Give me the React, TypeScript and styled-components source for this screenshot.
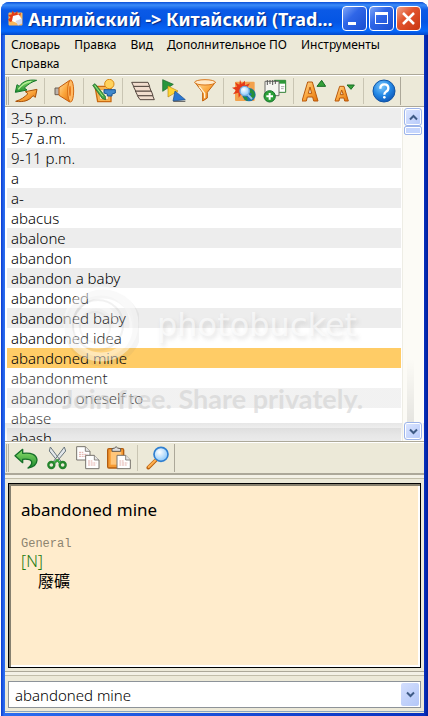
import React from "react";
import styled, { createGlobalStyle } from "styled-components";

const UI = '"Noto Sans", "Noto Sans CJK TC", sans-serif';

const GlobalStyle = createGlobalStyle`
  * { box-sizing: border-box; }
  body { margin: 0; background: #fff; font-family: ${UI}; color: #000; }
  button { padding: 0; border: 0; background: none; font: inherit; color: inherit; }
  svg { display: block; }
`;

const Page = styled.div`
  display: flex;
  min-height: 100vh;
  padding: 2px 0 0 1px;
`;

const Window = styled.main`
  display: flex;
  flex: 1;
  flex-direction: column;
  min-width: 0;
  padding: 0 4px 3px;
  border-radius: 8px 8px 0 0;
  background: linear-gradient(90deg, #0a3bcf, #2a6cf0 3px, #2a6cf0 4px, #0831c0 calc(100% - 4px), #001f9c);
`;

const TitleBar = styled.header`
  display: flex;
  align-items: center;
  gap: 4px;
  height: 33px;
  margin: 0 -4px;
  padding: 0 7px 0 6px;
  border-radius: 8px 8px 0 0;
  background: linear-gradient(#0a4fd8, #3c8cf8 3px, #0b5ae6 8px, #0455e4 20px, #0668fb 29px, #0347c8);
`;

const Title = styled.h1`
  flex: 1;
  min-width: 0;
  margin: 0;
  overflow: hidden;
  color: #fff;
  font-size: 18px;
  line-height: 28px;
  font-weight: 700;
  white-space: nowrap;
  text-shadow: 1px 1px 1px #0a2a80;
`;

const CaptionButtons = styled.div`
  display: flex;
  gap: 2px;
`;

const CaptionButton = styled.button<{ $close?: boolean }>`
  display: grid;
  place-items: center;
  width: 25px;
  height: 25px;
  border: 1px solid #fff;
  border-radius: 4px;
  background: ${(p) =>
    p.$close
      ? "linear-gradient(135deg, #f0a58c, #e2552f 40%, #c93410)"
      : "linear-gradient(135deg, #7ea6f8, #2f66e8 40%, #1a4fd0)"};
`;

const Client = styled.div`
  display: flex;
  flex: 1;
  flex-direction: column;
  min-height: 0;
  padding-bottom: 1px;
  background: #ece9d8;
`;

const MenuBar = styled.nav`
  display: flex;
  flex-wrap: wrap;
  gap: 0 14px;
  padding: 0 6px 1px;
`;

const MenuItem = styled.button`
  font-size: 12px;
  line-height: 19px;
`;

const ToolbarRow = styled.div`
  display: flex;
  height: 33px;
  padding: 2px 0 1px 1px;
  border-top: 1px solid #aca899;
  border-bottom: 1px solid #aca899;
  box-shadow: inset 0 1px #fff;
`;

const ToolGroup = styled.div`
  display: flex;
  align-items: stretch;
  padding: 0 1px;
  border-left: 3px double #b4b09f;
  border-right: 1px solid #aca899;
`;

const ToolButton = styled.button`
  display: grid;
  place-items: center;
  width: 31px;
`;

const Divider = styled.span`
  width: 1px;
  margin: 1px 4px 1px 3px;
  background: #c9c5b3;
`;

const ListArea = styled.section`
  position: relative;
  display: flex;
  flex: 1 1 0;
  min-height: 200px;
  padding: 1px 1px 0 2px;
  overflow: hidden;
  background: #fff;
`;

const WordList = styled.ul`
  flex: 1;
  height: 0;
  margin: 0;
  padding: 0;
  list-style: none;
`;

const Word = styled.li<{ $selected: boolean }>`
  padding-left: 4px;
  font-size: 15px;
  line-height: 20px;
  font-weight: 300;
  background: ${(p) => (p.$selected ? "#ffcc66" : "#fff")};
  &:nth-child(odd) { background: ${(p) => (p.$selected ? "#ffcc66" : "#ededed")}; }
`;

const ScrollBar = styled.div`
  position: relative;
  z-index: 1;
  display: flex;
  flex-direction: column;
  align-items: stretch;
  width: 21px;
  margin-left: 1px;
  padding: 0 1px 1px;
  border-left: 1px solid #eeede5;
  background: #fcfbf6;
`;

const Track = styled.div`
  flex: 1;
  margin: 0 8px 0 3px;
  background: linear-gradient(rgba(0, 0, 0, 0) 78%, rgba(0, 0, 0, 0.09));
`;

const ScrollButton = styled.button`
  display: grid;
  place-items: center;
  height: 18px;
  border: 1px solid #9db4ea;
  border-radius: 3px;
  background: linear-gradient(135deg, #dbe5ff, #b7cafa);
  box-shadow: inset 0 0 0 1px #fff;
`;

const Thumb = styled.div`
  height: 9px;
  border: 1px solid #9db4ea;
  border-radius: 2px;
  background: #c6d6fd;
  box-shadow: inset 0 0 0 1px #fff;
`;

const Watermark = styled.div`
  position: absolute;
  right: 0;
  bottom: 0;
  left: 0;
  display: flex;
  flex-direction: column;
  height: 158px;
  pointer-events: none;
`;

const Brand = styled.div`
  display: flex;
  align-items: center;
  gap: 18px;
  height: 84px;
  padding-left: 56px;
`;

const BrandName = styled.span`
  color: rgba(255, 255, 255, 0.6);
  font: 32px/36px "DejaVu Sans", sans-serif;
  text-shadow: 2px 3px 4px rgba(120, 120, 120, 0.22);
`;

const Slogan = styled.div`
  padding: 8px 0 0 57px;
  color: rgba(208, 208, 208, 0.6);
  font: 700 27px/48px Lato, sans-serif;
  white-space: nowrap;
  background: linear-gradient(rgba(255, 255, 255, 0), rgba(255, 255, 255, 0.25) 16px);
`;

const Shade = styled.div`
  flex: 1;
  background: linear-gradient(rgba(120, 120, 120, 0.18), rgba(120, 120, 120, 0.05) 12px, rgba(120, 120, 120, 0.02));
`;

const Splitter = styled.div`
  height: 5px;
  border-top: 1px solid #aca899;
  border-bottom: 1px solid #c2beaa;
  background: #f3f1e6;
`;

const Article = styled.article`
  height: 185px;
  margin: 4px 3px 3px;
  padding: 14px 10px;
  border: 1px solid #000;
  background: #ffeccc;
  box-shadow: inset 2px 2px #86806f, inset -2px -2px #fff;
`;

const Headword = styled.h2`
  margin: 0 0 14px;
  padding-left: 2px;
  font-size: 17px;
  line-height: 24px;
  font-weight: 400;
`;

const Domain = styled.p`
  margin: 0;
  padding-left: 2px;
  color: #8d8470;
  font: 12px/16px "Liberation Mono", monospace;
`;

const PartOfSpeech = styled.p`
  margin: 0;
  padding-left: 2px;
  color: #267a10;
  font-size: 16px;
  line-height: 18px;
  font-weight: 300;
`;

const Translation = styled.p`
  margin: 0;
  padding-left: 19px;
  font: 16px/20px "Noto Sans CJK TC", sans-serif;
`;

const ComboArea = styled.div`
  padding: 5px 3px 3px;
  border-bottom: 1px solid #8aa5bf;
`;

const Combo = styled.label`
  display: grid;
  grid-template-columns: 1fr 18px;
  align-items: center;
  height: 27px;
  padding-right: 1px;
  border: 1px solid #8d9399;
  background: #fff;
`;

const ComboSelect = styled.select`
  grid-area: 1 / 1 / 2 / 3;
  width: 100%;
  height: 25px;
  padding: 0 20px 0 6px;
  border: 0;
  background: none;
  color: #000;
  font: 300 15px/24px ${UI};
  appearance: none;
`;

const ComboArrow = styled.span`
  grid-area: 1 / 2 / 2 / 3;
  display: grid;
  place-items: center;
  height: 23px;
  border-radius: 2px;
  background: linear-gradient(135deg, #d3defd, #b3c7f8);
  pointer-events: none;
`;

const Icon = ({ children }: { children: React.ReactNode }) => (
  <svg width="24" height="24" viewBox="0 0 72 72" strokeLinejoin="round" aria-hidden="true">
    <defs>
      <linearGradient id="orange" x1="0" y1="0" x2="1" y2="1">
        <stop offset="0" stopColor="#ffe0a0" />
        <stop offset=".5" stopColor="#fba63c" />
        <stop offset="1" stopColor="#e0700c" />
      </linearGradient>
      <linearGradient id="green" x1="0" y1="0" x2="0" y2="1">
        <stop offset="0" stopColor="#8ee06c" />
        <stop offset="1" stopColor="#1b8c2c" />
      </linearGradient>
      <radialGradient id="blue" cx=".4" cy=".3" r=".8">
        <stop offset="0" stopColor="#7ec8fb" />
        <stop offset=".5" stopColor="#2489e6" />
        <stop offset="1" stopColor="#0a4dae" />
      </radialGradient>
      <radialGradient id="glass" cx=".4" cy=".35" r=".7">
        <stop offset="0" stopColor="#fff" />
        <stop offset="1" stopColor="#84c5fa" />
      </radialGradient>
    </defs>
    {children}
  </svg>
);

const Chevron = ({ up }: { up?: boolean }) => (
  <svg width="9" height="7" viewBox="0 0 9 7" fill="none" stroke="#3f5b86" strokeWidth="2" aria-hidden="true">
    <path d={up ? "M1 5.5 4.5 2 8 5.5" : "M1 1.5 4.5 5 8 1.5"} />
  </svg>
);

const AppLogo = () => (
  <svg width="17" height="17" viewBox="0 0 34 34" aria-hidden="true">
    <rect x="3" y="5" width="28" height="26" rx="2" fill="#f7b75e" />
    <path d="M11 1l4 6 6-5 0 7 7-3-2 7-12 8-8 3-4-5 5-4-5-5 7-1z" fill="#e43c16" />
    <path d="M12 12l12-3 5 9-9 8-10-4z" fill="#fff" />
    <path d="M17 22l13-5 0 10-8 4z" fill="#d3d8ea" />
  </svg>
);

const sheet = (x: number, y: number) => (
  <g transform={`translate(${x} ${y})`}>
    <path d="M0 0h26l14 14v26H0z" fill="#fff" stroke="#77736c" strokeWidth="3" />
    <path d="M26 0v14h14" fill="#e6e6e6" stroke="#77736c" strokeWidth="2.5" />
    <path d="M7 17h13M7 23h25M7 29h22" stroke="#dc9d97" strokeWidth="2.5" strokeDasharray="6 2" />
  </g>
);

const ICONS: Record<string, React.ReactNode> = {
  swap: (
    <>
      <path d="M4 40 9 17l7 5C27 6 45 1 68 4 52 9 42 16 31 27l8 6z" fill="url(#green)" stroke="#13752a" strokeWidth="3" />
      <path d="M13 31C23 17 34 10 51 7" stroke="#b8f09c" strokeWidth="4" fill="none" />
      <path d="M69 31 64 55l-7-5C46 65 29 70 5 67 21 62 31 55 42 44l-8-6z" fill="url(#orange)" stroke="#a85208" strokeWidth="3" />
    </>
  ),
  speaker: (
    <>
      <path d="M6 27h14v20H6z" fill="#b9b2ac" stroke="#6b5e52" strokeWidth="3" />
      <path d="M18 26 50 4q9 32 0 65L18 49z" fill="url(#orange)" stroke="#c25a0c" strokeWidth="3" />
      <ellipse cx="53" cy="36" rx="9" ry="33" fill="#ffba62" stroke="#d46a10" strokeWidth="3" />
      <ellipse cx="51" cy="36" rx="3" ry="16" fill="#e97b1e" />
    </>
  ),
  card: (
    <>
      <path d="M9 22h48v46H17z" fill="#f8b450" stroke="#c96b12" strokeWidth="4" />
      <path d="M18 32h31v29H24z" fill="#fff3cf" stroke="#e5963a" strokeWidth="2" />
      <path d="m2 19 7-5 31 38 1 10-10-3z" fill="#40a646" stroke="#175f24" strokeWidth="2" />
      <path d="m8 19 25 33" stroke="#a8e67f" strokeWidth="3" />
      <circle cx="52" cy="15" r="14" fill="#ffd25c" stroke="#d98b16" strokeWidth="3" />
      <path d="M36 32h34v10l-10 3v6H46v-6l-10-3z" fill="#3f88cb" stroke="#1b5593" strokeWidth="3" />
    </>
  ),
  cards: (
    <g fill="#f1ddce" stroke="#54473f" strokeWidth="3">
      <path d="M19 50h46l5 12H27z" />
      <path d="M13 36h48l5 14H20z" />
      <path d="M7 22h48l5 14H14z" />
      <path d="M2 10h49l5 12H8z" />
    </g>
  ),
  flow: (
    <g strokeWidth="2">
      <path d="M2 2 34 16 2 37z" fill="#27963c" stroke="#126024" />
      <path d="M18 21 48 36 18 54z" fill="#ffd534" stroke="#b98910" />
      <path d="M39 36 70 62 33 66z" fill="#2b77d0" stroke="#134a8c" />
      <path d="M34 67h36" stroke="#555" strokeWidth="3" />
    </g>
  ),
  filter: (
    <>
      <path d="M6 10 29 40v26l14-9V40L67 10z" fill="url(#orange)" stroke="#c1600e" strokeWidth="3" />
      <ellipse cx="36" cy="10" rx="31" ry="8" fill="#ffe9c8" stroke="#d9781e" strokeWidth="3" />
      <path d="M19 23 35 43v15" stroke="#fff3d8" strokeWidth="4" fill="none" />
    </>
  ),
  web: (
    <>
      <rect x="9" y="8" width="59" height="58" rx="3" fill="#f3a24d" />
      <path d="M24 2l5 13 10-10 0 14 15-6-9 14 12 7-16 3 1 15-12-9-10 13-1-15-16 5 9-12L0 26l15-3-6-13 13 7z" fill="#e53a19" />
      <circle cx="51" cy="47" r="20" fill="#1872b2" />
      <path d="M51 29q19 3 18 22l-12 12-5-9 8-9-11-7zM32 51l13 4 3 11-9-4z" fill="#24903a" />
      <circle cx="38" cy="36" r="14" fill="url(#glass)" stroke="#6fa9de" strokeWidth="4" />
      <path d="M47 47 60 60" stroke="#97c4ee" strokeWidth="6" />
    </>
  ),
  addcard: (
    <>
      <path d="M34 4h34v36H34z" fill="#fff" stroke="#317f36" strokeWidth="3" />
      <path d="M34 4h34v10H34z" fill="#2d9838" />
      <path d="M6 7h42v43H6z" fill="#f5f5f0" stroke="#6d6d68" strokeWidth="3" />
      <path d="M13 3v15M21 3v12M29 3v15M37 3v12" stroke="#555" strokeWidth="3" />
      <path d="M54 23h10M54 29h8" stroke="#aaa" strokeWidth="3" />
      <circle cx="20" cy="52" r="17" fill="#2ca038" stroke="#11702a" strokeWidth="3" />
      <path d="M20 42v20M10 52h20" stroke="#fff" strokeWidth="6" />
    </>
  ),
  larger: (
    <>
      <path d="M0 66 17 9h14l17 57H35l-3-12H16l-3 12zm19-23h10l-5-19z" fill="url(#orange)" stroke="#b8590c" strokeWidth="3" />
      <path d="M59 4 71 22H45z" fill="#35a13a" stroke="#176d24" strokeWidth="3" />
    </>
  ),
  smaller: (
    <>
      <path d="M6 66 20 22h13l13 44H35l-2-9H20l-2 9zm16-19h9l-5-14z" fill="url(#orange)" stroke="#b8590c" strokeWidth="3" />
      <path d="M42 18h22L54 31z" fill="#35a13a" stroke="#176d24" strokeWidth="3" />
    </>
  ),
  help: (
    <>
      <circle cx="36" cy="36" r="33" fill="url(#blue)" stroke="#1155a5" strokeWidth="3" />
      <path d="M25 29q0-13 12-13t12 11q0 8-7 11-5 3-5 9" fill="none" stroke="#fff" strokeWidth="7" />
      <circle cx="37" cy="55" r="4" fill="#fff" />
    </>
  ),
  undo: (
    <path
      d="M3 29 26 10v12q41-4 43 20-1 20-27 24 13-9 11-19-3-9-27-7v10z"
      fill="url(#green)"
      stroke="#156f28"
      strokeWidth="4"
    />
  ),
  cut: (
    <>
      <path d="M16 3 13 15l29 36 6-5zM58 3l4 12-31 37-6-5z" fill="#e3e7ea" stroke="#68757d" strokeWidth="3" />
      <circle cx="19" cy="57" r="9" fill="none" stroke="#24842c" strokeWidth="7" />
      <circle cx="53" cy="57" r="9" fill="none" stroke="#24842c" strokeWidth="7" />
      <path d="m27 51 10-9 8 9" fill="none" stroke="#38a43d" strokeWidth="6" />
    </>
  ),
  copy: (
    <>
      {sheet(2, 2)}
      {sheet(29, 28)}
    </>
  ),
  paste: (
    <>
      <rect x="2" y="8" width="48" height="58" rx="4" fill="#f59a32" stroke="#b35d10" strokeWidth="4" />
      <path d="M11 17h32v39H11z" fill="#ffc67a" />
      <path d="M15 16V8l8-2q4-8 9 0l9 2v8z" fill="#ddd" stroke="#5e5a54" strokeWidth="3" />
      {sheet(30, 28)}
    </>
  ),
  search: (
    <>
      <path d="M7 65 30 42" stroke="#b96110" strokeWidth="11" strokeLinecap="round" />
      <path d="M8 63 29 42" stroke="#ffb04e" strokeWidth="6" strokeLinecap="round" />
      <circle cx="45" cy="25" r="21" fill="url(#glass)" stroke="#2f7fd0" strokeWidth="5" />
    </>
  ),
};

const MAIN_TOOLS: [string, string][][] = [
  [["swap", "Сменить направление"]],
  [["speaker", "Произношение"]],
  [["card", "Карточка"]],
  [["cards", "Карточки"], ["flow", "Обучение"], ["filter", "Фильтр"]],
  [["web", "Поиск в сети"], ["addcard", "Добавить карточку"]],
  [["larger", "Увеличить шрифт"], ["smaller", "Уменьшить шрифт"]],
  [["help", "Справка"]],
];

const EDIT_TOOLS: [string, string][][] = [
  [["undo", "Назад"], ["cut", "Вырезать"], ["copy", "Копировать"], ["paste", "Вставить"]],
  [["search", "Найти"]],
];

const MENUS = ["Словарь", "Правка", "Вид", "Дополнительное ПО", "Инструменты", "Справка"];

const WORDS = [
  "3-5 p.m.", "5-7 a.m.", "9-11 p.m.", "a", "a-", "abacus", "abalone", "abandon", "abandon a baby",
  "abandoned", "abandoned baby", "abandoned idea", "abandoned mine", "abandonment",
  "abandon oneself to", "abase", "abash",
];

const Toolbar = ({ groups }: { groups: [string, string][][] }) => (
  <ToolbarRow role="toolbar">
    <ToolGroup>
      {groups.map((group, i) => (
        <React.Fragment key={i}>
          {i > 0 && <Divider />}
          {group.map(([name, label]) => (
            <ToolButton key={name} type="button" aria-label={label}>
              <Icon>{ICONS[name]}</Icon>
            </ToolButton>
          ))}
        </React.Fragment>
      ))}
    </ToolGroup>
  </ToolbarRow>
);

const BrandLogo = () => (
  <svg width="78" height="84" viewBox="0 0 78 84" fill="none" aria-hidden="true">
    <circle cx="42" cy="45" r="34" stroke="#777" strokeOpacity=".08" strokeWidth="9" />
    <circle cx="40" cy="41" r="33" fill="#fff" fillOpacity=".15" stroke="#fff" strokeOpacity=".45" strokeWidth="9" />
    <circle cx="37" cy="42" r="25" stroke="#888" strokeOpacity=".12" strokeWidth="2" />
    <circle cx="35" cy="43" r="20" stroke="#fff" strokeOpacity=".3" strokeWidth="5" />
    <circle cx="34" cy="44" r="15" stroke="#888" strokeOpacity=".08" strokeWidth="2" />
  </svg>
);

export default function App() {
  const [selected, setSelected] = React.useState("abandoned mine");
  return (
    <Page>
      <GlobalStyle />
      <Window>
        <TitleBar>
          <AppLogo />
          <Title>Английский -&gt; Китайский (Trad...</Title>
          <CaptionButtons>
            <CaptionButton type="button" aria-label="Свернуть">
              <svg width="15" height="15" viewBox="0 0 15 15"><path d="M1 11h8v3H1z" fill="#fff" /></svg>
            </CaptionButton>
            <CaptionButton type="button" aria-label="Развернуть">
              <svg width="15" height="15" viewBox="0 0 15 15"><path d="M1 1h13v12H1zM2 4v8h11V4z" fill="#fff" fillRule="evenodd" /></svg>
            </CaptionButton>
            <CaptionButton type="button" aria-label="Закрыть" $close>
              <svg width="15" height="15" viewBox="0 0 15 15"><path d="m2 2 11 11M13 2 2 13" stroke="#fff" strokeWidth="2.5" /></svg>
            </CaptionButton>
          </CaptionButtons>
        </TitleBar>
        <Client>
          <MenuBar>
            {MENUS.map((m) => <MenuItem key={m} type="button">{m}</MenuItem>)}
          </MenuBar>
          <Toolbar groups={MAIN_TOOLS} />
          <ListArea>
            <WordList role="listbox" aria-label="Слова">
              {WORDS.map((w) => (
                <Word key={w} role="option" aria-selected={w === selected} $selected={w === selected} onClick={() => setSelected(w)}>
                  {w}
                </Word>
              ))}
            </WordList>
            <Watermark>
              <Brand>
                <BrandLogo />
                <BrandName>photobucket</BrandName>
              </Brand>
              <Slogan>Join free. Share privately.</Slogan>
              <Shade />
            </Watermark>
            <ScrollBar>
              <ScrollButton type="button" aria-label="Вверх"><Chevron up /></ScrollButton>
              <Thumb />
              <Track />
              <ScrollButton type="button" aria-label="Вниз"><Chevron /></ScrollButton>
            </ScrollBar>
          </ListArea>
          <Toolbar groups={EDIT_TOOLS} />
          <Splitter />
          <Article>
            <Headword>abandoned mine</Headword>
            <Domain>General</Domain>
            <PartOfSpeech>[N]</PartOfSpeech>
            <Translation lang="zh-Hant">廢礦</Translation>
          </Article>
          <Splitter />
          <ComboArea>
            <Combo>
              <ComboSelect aria-label="Слово" value={selected} onChange={(e) => setSelected(e.target.value)}>
                {WORDS.map((w) => <option key={w}>{w}</option>)}
              </ComboSelect>
              <ComboArrow><Chevron /></ComboArrow>
            </Combo>
          </ComboArea>
        </Client>
      </Window>
    </Page>
  );
}
